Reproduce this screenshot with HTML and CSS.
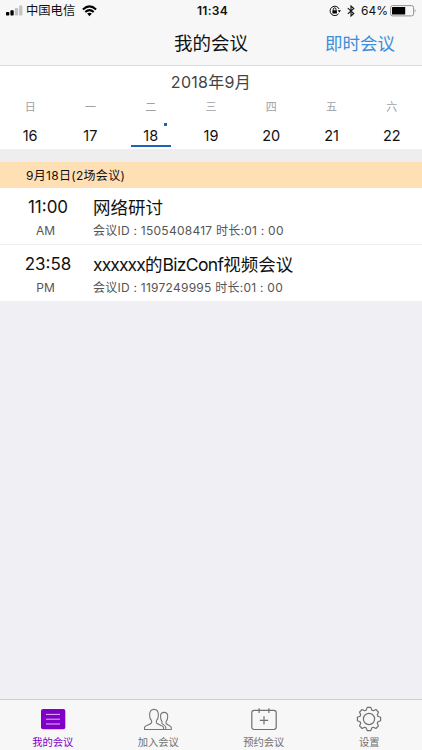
FILE: index.html
```html
<!DOCTYPE html>
<html lang="zh-CN">
<head>
<meta charset="utf-8">
<title>我的会议</title>
<link rel="stylesheet" href="styles.css">
</head>
<body>
<div class="app">
  <header class="header">
    <div class="status">
      <div class="status-left">
        <svg width="17" height="12" viewBox="0 0 17 12"><rect x="0" y="7" width="3.3" height="3.5" rx=".7"/><rect x="4.4" y="5.3" width="3.3" height="5.2" rx=".7"/><g fill="#c4c4c4"><rect x="8.8" y="3.1" width="3.3" height="7.4" rx=".7"/><rect x="13.1" y="0.6" width="3.3" height="9.9" rx=".7"/></g></svg>
        <span class="carrier">中国电信</span>
        <svg class="wifi" width="15" height="12" viewBox="0 0 15 12"><g fill="none" stroke="#000" stroke-width="2"><path d="M.9 4.5Q7.5-1.8 14.1 4.5"/><path d="M3.3 7.1Q7.5 3.2 11.7 7.1"/></g><path d="M5.1 8.6Q7.5 6.8 9.9 8.6L7.5 11.2Z"/></svg>
      </div>
      <div class="clock">11:34</div>
      <div class="status-right">
        <svg width="12" height="12" viewBox="0 0 12 12"><path d="M9.6 8.7A4.7 4.7 0 1 1 10.1 4" fill="none" stroke="#111" stroke-width="1"/><path d="M8.7 5.2H12L10.4 7.4Z"/><rect x="3.4" y="5.2" width="4.5" height="3.4" rx=".4"/><path d="M4.3 5.3V4.2a1.35 1.35 0 0 1 2.7 0v1.1" fill="none" stroke="#000" stroke-width=".9"/></svg>
        <svg class="bluetooth" width="8" height="12" viewBox="0 0 8 12"><path d="M.8 3.2L6.8 8.5L4 11V1L6.8 3.5L.8 8.8" fill="none" stroke="#111" stroke-width="1.1"/></svg>
        <span class="percent">64%</span>
        <svg width="27" height="12" viewBox="0 0 27 12"><rect x=".6" y=".6" width="23" height="10.3" rx="2" fill="none" stroke="#888" stroke-width=".9"/><rect x="2" y="2" width="13.2" height="7.5" rx=".6"/><path d="M24.8 3.9q1.8 1.8 0 3.8Z" fill="#888"/></svg>
      </div>
    </div>
    <nav class="navbar">
      <h1>我的会议</h1>
      <a class="instant">即时会议</a>
    </nav>
  </header>

  <section class="calendar">
    <div class="month">2018年9月</div>
    <div class="week names"><span>日</span><span>一</span><span>二</span><span>三</span><span>四</span><span>五</span><span>六</span></div>
    <div class="week days"><span>16</span><span>17</span><span class="selected">18</span><span>19</span><span>20</span><span>21</span><span>22</span></div>
  </section>

  <main class="content">
    <div class="date-heading">9月18日(2场会议)</div>
    <article class="meeting">
      <div class="when"><div class="time">11:00</div><div class="period">AM</div></div>
      <div class="info"><div class="title">网络研讨</div><div class="detail">会议ID : 1505408417 时长:01 : 00</div></div>
    </article>
    <article class="meeting">
      <div class="when"><div class="time">23:58</div><div class="period">PM</div></div>
      <div class="info"><div class="title"><span class="host">xxxxxx</span>的<span class="brand">BizConf</span>视频会议</div><div class="detail">会议ID : 1197249995 时长:01 : 00</div></div>
    </article>
  </main>

  <footer class="tabs">
    <a class="tab active">
      <svg width="28" height="26" viewBox="0 0 28 26"><rect x="2" y="3" width="24.3" height="20.3" rx="2" fill="#8100c8"/><path d="M7 8.4h14M7 13.2h14M7 18h14" stroke="#e3b8f5"/></svg>
      <span>我的会议</span>
    </a>
    <a class="tab">
      <svg width="28" height="26" viewBox="0 0 28 26"><g fill="none" stroke="#777" stroke-width="1.1" stroke-linejoin="round"><path d="M.5 23.5V21.4C.5 19.4 6.8 18.7 7.6 16.7V14.7C6.2 13.4 5.6 11.5 5.6 9C5.6 5.3 7 3.4 10 3.4S14.4 5.3 14.4 9C14.4 11.5 13.8 13.4 12.4 14.7V16.7C13.2 18.7 19.5 19.4 19.5 21.4V23.5Z"/><path d="M19.5 23.5H27.3V21.6C27.3 19.8 23.2 19.1 22.1 17.4V15.5C23.2 14.3 23.7 12.5 23.7 10.4C23.7 7.8 22.4 6.4 20.1 6.4S16.5 7.8 16.5 10.4C16.5 12.5 17 14.3 18 15.5V17.4C18.6 18.5 21.8 19.4 21.8 21.5V23.5"/></g></svg>
      <span>加入会议</span>
    </a>
    <a class="tab">
      <svg width="28" height="26" viewBox="0 0 28 26"><g fill="none" stroke="#707070" stroke-width="1.2"><path d="M4.2 4.4H23.8Q26.2 4.4 26.2 6.8V21.1Q26.2 23.5 23.8 23.5H4.2Q1.8 23.5 1.8 21.1V6.8Q1.8 4.4 4.2 4.4ZM9.1 2.2V7M18.9 2.2V7M14 10.2v8.4M9.8 14.4h8.4"/></g></svg>
      <span>预约会议</span>
    </a>
    <a class="tab">
      <svg width="28" height="26" viewBox="-14 -13 28 26"><g fill="none" stroke="#707070" stroke-width="1.2" stroke-linejoin="round"><path d="M-2.8-8.9L-1.8-11.6H1.8L2.8-8.9L4.3-8.3L6.9-9.5L9.5-6.9L8.3-4.3L8.9-2.8L11.6-1.8V1.8L8.9 2.8L8.3 4.3L9.5 6.9L6.9 9.5L4.3 8.3L2.8 8.9L1.8 11.6H-1.8L-2.8 8.9L-4.3 8.3L-6.9 9.5L-9.5 6.9L-8.3 4.3L-8.9 2.8L-11.6 1.8V-1.8L-8.9-2.8L-8.3-4.3L-9.5-6.9L-6.9-9.5L-4.3-8.3Z"/><circle r="5.6"/></g></svg>
      <span>设置</span>
    </a>
  </footer>
</div>
</body>
</html>
```
FILE: styles.css
```css
* { box-sizing: border-box; }
body {
  margin: 0;
  font-family: Inter, "Noto Sans CJK SC", sans-serif;
  color: #111;
  background: #efeff4;
}
svg { display: block; flex: none; }
.app { width: 422px; height: 750px; display: flex; flex-direction: column; overflow: hidden; }

.header { height: 66px; background: #f7f7f7; border-bottom: 1px solid #dcdcdc; }
.status {
  height: 22px;
  display: grid;
  grid-template-columns: 1fr auto 1fr;
  align-items: center;
  padding: 0 5px 0 6px;
  font-size: 12px;
  line-height: 22px;
  white-space: nowrap;
}
.status-left, .status-right { display: flex; align-items: center; }
.status-right { justify-content: flex-end; }
.carrier { margin-left: 3px; font-size: 12.3px; }
.wifi { margin-left: 7px; }
.clock { padding-left: 2px; font-weight: 600; font-size: 12px; letter-spacing: .3px; }
.bluetooth { margin-left: 6px; }
.percent { margin: 0 2px 0 6px; letter-spacing: 0; }
.navbar {
  height: 43px;
  display: grid;
  grid-template-columns: 1fr auto 1fr;
  align-items: center;
  line-height: 43px;
}
.navbar h1 { grid-column: 2; margin: 0; font-size: 18.5px; font-weight: 400; }
.instant { justify-self: end; margin-right: 27px; color: #3c8ed9; font-size: 17.5px; }

.calendar { height: 83px; background: #fff; text-align: center; }
.month { height: 32px; line-height: 33px; font-size: 16px; color: #444; letter-spacing: .3px; }
.week { display: grid; grid-template-columns: repeat(7, 1fr); }
.names { height: 18px; line-height: 18px; font-size: 11px; color: #a0a0a5; }
.days { height: 33px; line-height: 39px; font-size: 14.5px; justify-items: center; }
.days span { width: 40px; height: 31px; }
.selected { position: relative; border-bottom: 2px solid #1f62bd; }
.selected::after { content: ""; position: absolute; top: 7px; right: 4px; width: 3px; height: 3px; background: #1f62bd; }

.content { flex: 1; border-top: 13px solid #eee; }
.date-heading { height: 26px; padding-left: 26px; line-height: 27px; font-size: 12px; background: #ffe0b5; letter-spacing: .3px; }
.meeting { height: 57px; display: flex; background: #fff; border-bottom: 1px solid #ededf0; white-space: nowrap; }
.meeting:last-child { height: 56px; border-bottom: 0; }
.when { width: 93px; padding-right: 2px; text-align: center; }
.time { height: 32px; line-height: 38px; font-size: 17px; padding-left: 5px; }
.period { height: 24px; line-height: 21px; font-size: 12px; color: #555; }
.title { height: 32px; line-height: 39px; font-size: 17.5px; }
.host { letter-spacing: -.9px; }
.brand { letter-spacing: -.65px; }
.detail { height: 24px; line-height: 21px; font-size: 12px; color: #555; letter-spacing: .25px; }

.tabs { height: 51px; display: grid; grid-template-columns: repeat(4, 1fr); background: #f7f7f7; border-top: 1px solid #cdcdd1; }
.tab { display: flex; flex-direction: column; align-items: center; padding-top: 6px; color: #707070; font-size: 10.3px; }
.tab span { height: 20px; line-height: 21px; }
.active { color: #8100c8; }
```
